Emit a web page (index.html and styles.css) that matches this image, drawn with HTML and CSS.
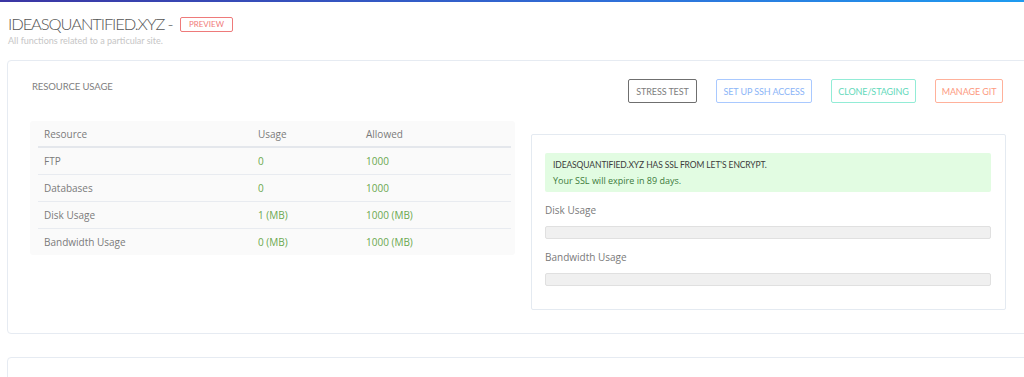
FILE: index.html
```html
<!DOCTYPE html>
<html lang="en">
    <head>
        <meta charset="UTF-8" />
        <meta name="viewport" content="width=device-width, initial-scale=1.0" />
        <title>Website</title>
        <link rel="stylesheet" href="styles.css">
    </head>
    <body>
        <div class="topbar"></div>
        <div class="page">
            <div class="header">
                <h2>IDEASQUANTIFIED.XYZ - <span class="badge">PREVIEW</span></h2>
                <p>All functions related to a particular site.</p>
            </div>

            <div class="card">
                <div class="card-head">
                    <h4>RESOURCE USAGE</h4>
                    <div class="actions">
                        <button class="btn dark">STRESS TEST</button>
                        <button class="btn blue">SET UP SSH ACCESS</button>
                        <button class="btn teal">CLONE/STAGING</button>
                        <button class="btn orange">MANAGE GIT</button>
                    </div>
                </div>
                <div class="columns">
                    <div class="usage">
                        <table>
                            <thead>
                                <tr>
                                    <th class="c1">Resource</th>
                                    <th class="c2">Usage</th>
                                    <th>Allowed</th>
                                </tr>
                            </thead>
                            <tbody>
                                <tr>
                                    <td>FTP</td>
                                    <td class="ok">0</td>
                                    <td class="ok">1000</td>
                                </tr>
                                <tr>
                                    <td>Databases</td>
                                    <td class="ok">0</td>
                                    <td class="ok">1000</td>
                                </tr>
                                <tr>
                                    <td>Disk Usage</td>
                                    <td class="ok">1 (MB)</td>
                                    <td class="ok">1000 (MB)</td>
                                </tr>
                                <tr>
                                    <td>Bandwidth Usage</td>
                                    <td class="ok">0 (MB)</td>
                                    <td class="ok">1000 (MB)</td>
                                </tr>
                            </tbody>
                        </table>
                    </div>
                    <div class="panel">
                        <div class="alert">
                            <strong>IDEASQUANTIFIED.XYZ HAS SSL FROM LET'S ENCRYPT.</strong>
                            <span>Your SSL will expire in 89 days.</span>
                        </div>
                        <div class="meter">
                            <label>Disk Usage</label>
                            <div class="bar"><div class="fill" style="width: 0%"></div></div>
                        </div>
                        <div class="meter">
                            <label>Bandwidth Usage</label>
                            <div class="bar"><div class="fill" style="width: 0%"></div></div>
                        </div>
                    </div>
                </div>
            </div>

            <div class="card next"></div>
        </div>
    </body>
</html>
```

FILE: styles.css
```css
body {
    margin: 0;
    overflow: hidden;
    background: #fff;
    font-family: "Open Sans", "Liberation Sans", sans-serif;
}
h2,
h4,
p {
    margin: 0;
}
.topbar {
    height: 2px;
    background: linear-gradient(to right, #3b35a3, #2f6fd8 60%, #1e9bf0);
}
.page {
    padding-left: 7px;
}
.header {
    padding: 11px 0 0 1px;
}
.header h2 {
    font-family: "Lato", sans-serif;
    font-weight: 300;
    font-size: 16.5px;
    line-height: 22px;
    color: #555;
    letter-spacing: -1.1px;
    display: flex;
    align-items: center;
    white-space: pre;
}
.badge {
    margin-left: 4px;
    width: 53px;
    height: 15px;
    box-sizing: border-box;
    border: 1px solid #ee7a7a;
    border-radius: 2px;
    color: #f07a7a;
    font-size: 8px;
    line-height: 13px;
    text-align: center;
    font-weight: 400;
    letter-spacing: 0;
}
.header p {
    font-family: "Lato", sans-serif;
    font-size: 9px;
    line-height: 12px;
    color: #c6c6c6;
}
.card {
    width: 1023px;
    box-sizing: border-box;
    margin-top: 13px;
    border: 1px solid #e6ebf2;
    border-radius: 4px;
    padding: 18px 23px 23px 22px;
}
.card.next {
    margin-top: 23px;
    height: 40px;
}
.card-head {
    display: flex;
    justify-content: space-between;
    align-items: flex-start;
}
.card-head h4 {
    font-family: "Lato", sans-serif;
    font-weight: 400;
    font-size: 9.5px;
    color: #808080;
    margin: 2px 0 0 2px;
    letter-spacing: -0.1px;
}
.actions {
    display: flex;
    gap: 19px;
    margin-right: 3px;
}
.btn {
    height: 24px;
    padding: 0;
    background: #fff;
    border: 1px solid;
    border-radius: 2px;
    font-family: "Lato", sans-serif;
    font-size: 9px;
    letter-spacing: -0.1px;
    white-space: nowrap;
}
.btn.dark {
    width: 69px;
    border-color: #6f6f6f;
    color: #7d7d7d;
}
.btn.blue {
    width: 96px;
    border-color: #a9c9ff;
    color: #8cb5f7;
}
.btn.teal {
    width: 85px;
    border-color: #92ecd6;
    color: #64d9bb;
}
.btn.orange {
    width: 68px;
    border-color: #ffb19b;
    color: #fd9a7f;
}
.columns {
    display: flex;
    gap: 16px;
    margin-top: 18px;
    align-items: flex-start;
}
.usage {
    width: 485px;
    background: #fafafa;
    border-radius: 3px;
    padding: 0 4px 0 8px;
    box-sizing: border-box;
}
table {
    width: 100%;
    border-collapse: collapse;
    font-size: 10px;
    color: #7a7a7a;
}
th,
td {
    text-align: left;
    padding: 0 6px;
    font-weight: 400;
}
th {
    height: 25px;
    border-bottom: 2px solid #e4e7ec;
}
td {
    height: 26px;
    border-bottom: 1px solid #e8ebf0;
}
tbody tr:last-child td {
    border-bottom: none;
}
th.c1 {
    width: 202px;
}
th.c2 {
    width: 96px;
}
td.ok {
    color: #6aa84f;
}
.panel {
    flex: 1;
    margin-top: 13px;
    border: 1px solid #e4eaf1;
    border-radius: 2px;
    padding: 18px 14px 23px 13px;
}
.alert {
    background: #e2fce2;
    border-radius: 2px;
    padding: 5px 8px 4px;
    display: flex;
    flex-direction: column;
}
.alert strong {
    font-family: "Lato", sans-serif;
    font-weight: 400;
    font-size: 8.5px;
    color: #3b3b3b;
    line-height: 15px;
    letter-spacing: -0.1px;
}
.alert span {
    font-size: 9px;
    color: #3c7a3c;
    line-height: 15px;
}
.meter {
    margin-top: 11px;
}
.meter label {
    display: block;
    font-size: 10px;
    color: #7a7a7a;
    line-height: 14px;
}
.bar {
    margin-top: 9px;
    height: 13px;
    box-sizing: border-box;
    background: #f0f0f0;
    border: 1px solid #e0e0e0;
    border-radius: 2px;
    overflow: hidden;
}
.bar .fill {
    height: 100%;
    background: #6aa84f;
}
```
